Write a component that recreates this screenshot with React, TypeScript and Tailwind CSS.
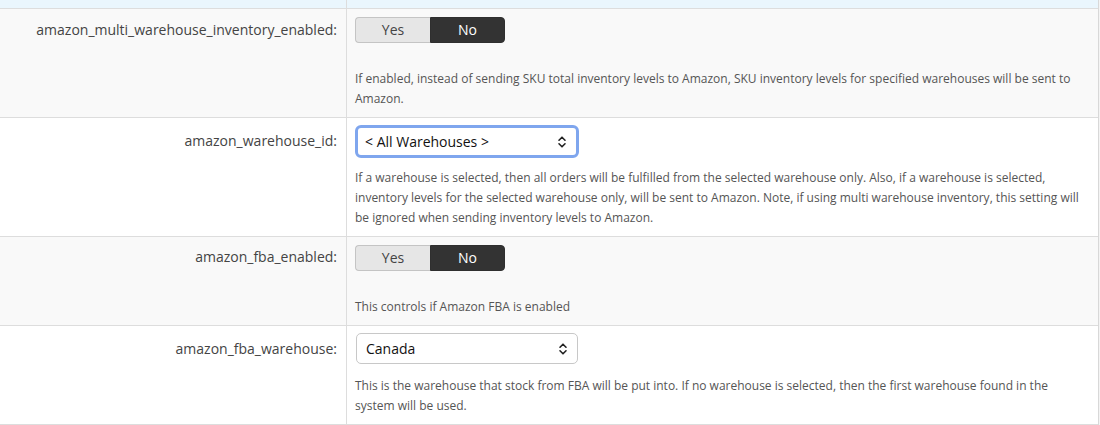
import React from "react";

function Toggle() {
  return (
    <div className="flex h-[26px] w-[150px] text-[14px] leading-none">
      <div className="flex w-[75px] items-center justify-center rounded-l-[4px] border border-r-0 border-[#c4c4c4] bg-[#e6e6e6] text-[#444]">
        Yes
      </div>
      <div className="flex w-[75px] items-center justify-center rounded-r-[4px] border border-[#2f2f2f] bg-[#333333] text-white">
        No
      </div>
    </div>
  );
}

function Chevrons() {
  return (
    <svg width="10" height="14" viewBox="0 0 10 14" fill="none" stroke="#222" strokeWidth="1.6" strokeLinecap="round" strokeLinejoin="round">
      <path d="M2 5.2 L5 2.2 L8 5.2" />
      <path d="M2 8.8 L5 11.8 L8 8.8" />
    </svg>
  );
}

function Select({ value, focused }: { value: string; focused?: boolean }) {
  return (
    <div
      className={
        focused
          ? "flex h-[33px] w-[224px] items-center justify-between rounded-[6px] border-[3px] border-[#7fa6ee] bg-white pl-[7px] pr-[9px] text-[14px] text-[#111]"
          : "ml-px flex h-[31px] w-[222px] items-center justify-between rounded-[5px] border border-[#c8c8c8] bg-white pl-[9px] pr-[9px] text-[14px] text-[#111]"
      }
    >
      <span>{value}</span>
      <Chevrons />
    </div>
  );
}

function Row({
  label,
  bg,
  control,
  desc,
  descGap,
  labelPad,
  ctrlPad,
}: {
  label: string;
  bg: string;
  control: React.ReactNode;
  desc: string;
  descGap: string;
  labelPad: string;
  ctrlPad: string;
}) {
  return (
    <div className={`flex border-b border-[#dddddd] ${bg}`}>
      <div className={`w-[347px] shrink-0 border-r border-[#dddddd] pr-[9px] ${labelPad} text-right text-[14px] leading-[20px] text-[#444]`}>
        {label}
      </div>
      <div className={`flex-1 pb-[8px] pl-[8px] pr-[16px] ${ctrlPad}`}>
        {control}
        <p className={`${descGap} text-[12px] leading-[20px] text-[#555]`}>{desc}</p>
      </div>
    </div>
  );
}

export default function App() {
  return (
    <div
      className="h-[425px] w-[1100px] overflow-hidden bg-[#f4f4f4]"
      style={{ fontFamily: '"Open Sans", "Noto Sans", sans-serif' }}
    >
      <div className="w-[1099px] border-r border-[#d8d8d8]">
        <div className="flex h-[9px] border-b border-[#dddddd] bg-[#eaf6fd]">
          <div className="w-[347px] border-r border-[#dddddd]" />
        </div>
        <Row
          label="amazon_multi_warehouse_inventory_enabled:"
          bg="bg-[#f9f9f9]"
          control={<Toggle />}
          desc="If enabled, instead of sending SKU total inventory levels to Amazon, SKU inventory levels for specified warehouses will be sent to Amazon."
          descGap="mt-[26px]"
          labelPad="pt-[11px]"
          ctrlPad="pt-[8px]"
        />
        <Row
          label="amazon_warehouse_id:"
          bg="bg-white"
          control={<Select value="< All Warehouses >" focused />}
          desc="If a warehouse is selected, then all orders will be fulfilled from the selected warehouse only. Also, if a warehouse is selected, inventory levels for the selected warehouse only, will be sent to Amazon. Note, if using multi warehouse inventory, this setting will be ignored when sending inventory levels to Amazon."
          descGap="mt-[10px]"
          labelPad="pt-[13px]"
          ctrlPad="pt-[7px]"
        />
        <Row
          label="amazon_fba_enabled:"
          bg="bg-[#f9f9f9]"
          control={<Toggle />}
          desc="This controls if Amazon FBA is enabled"
          descGap="mt-[26px]"
          labelPad="pt-[10px]"
          ctrlPad="pt-[8px]"
        />
        <Row
          label="amazon_fba_warehouse:"
          bg="bg-white"
          control={<Select value="Canada" />}
          desc="This is the warehouse that stock from FBA will be put into. If no warehouse is selected, then the first warehouse found in the system will be used."
          descGap="mt-[12px]"
          labelPad="pt-[13px]"
          ctrlPad="pt-[7px]"
        />
      </div>
    </div>
  );
}
